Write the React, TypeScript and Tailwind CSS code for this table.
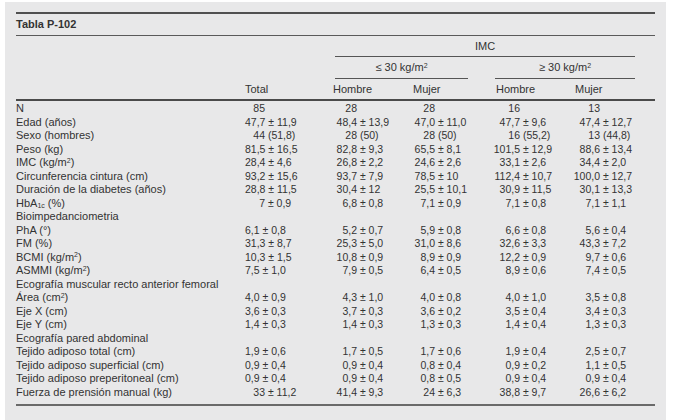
import React from "react"

type Row = { label: React.ReactNode; values?: string[] }

const sq = <sup className="text-[7px]">2</sup>

const rows: Row[] = [
  { label: "N", values: ["85", "28", "28", "16", "13"] },
  { label: "Edad (años)", values: ["47,7 ± 11,9", "48,4 ± 13,9", "47,0 ± 11,0", "47,7 ± 9,6", "47,4 ± 12,7"] },
  { label: "Sexo (hombres)", values: ["44 (51,8)", "28 (50)", "28 (50)", "16 (55,2)", "13 (44,8)"] },
  { label: "Peso (kg)", values: ["81,5 ± 16,5", "82,8 ± 9,3", "65,5 ± 8,1", "101,5 ± 12,9", "88,6 ± 13,4"] },
  { label: <>IMC (kg/m{sq})</>, values: ["28,4 ± 4,6", "26,8 ± 2,2", "24,6 ± 2,6", "33,1 ± 2,6", "34,4 ± 2,0"] },
  { label: "Circunferencia cintura (cm)", values: ["93,2 ± 15,6", "93,7 ± 7,9", "78,5 ± 10", "112,4 ± 10,7", "100,0 ± 12,7"] },
  { label: "Duración de la diabetes (años)", values: ["28,8 ± 11,5", "30,4 ± 12", "25,5 ± 10,1", "30,9 ± 11,5", "30,1 ± 13,3"] },
  {
    label: (
      <>
        HbA<sub className="text-[7px]">1c</sub> (%)
      </>
    ),
    values: ["7 ± 0,9", "6,8 ± 0,8", "7,1 ± 0,9", "7,1 ± 0,8", "7,1 ± 1,1"],
  },
  { label: "Bioimpedanciometria" },
  { label: "PhA (°)", values: ["6,1 ± 0,8", "5,2 ± 0,7", "5,9 ± 0,8", "6,6 ± 0,8", "5,6 ± 0,4"] },
  { label: "FM (%)", values: ["31,3 ± 8,7", "25,3 ± 5,0", "31,0 ± 8,6", "32,6 ± 3,3", "43,3 ± 7,2"] },
  { label: <>BCMI (kg/m{sq})</>, values: ["10,3 ± 1,5", "10,8 ± 0,9", "8,9 ± 0,9", "12,2 ± 0,9", "9,7 ± 0,6"] },
  { label: <>ASMMI (kg/m{sq})</>, values: ["7,5 ± 1,0", "7,9 ± 0,5", "6,4 ± 0,5", "8,9 ± 0,6", "7,4 ± 0,5"] },
  { label: "Ecografía muscular recto anterior femoral" },
  { label: <>Área (cm{sq})</>, values: ["4,0 ± 0,9", "4,3 ± 1,0", "4,0 ± 0,8", "4,0 ± 1,0", "3,5 ± 0,8"] },
  { label: "Eje X (cm)", values: ["3,6 ± 0,3", "3,7 ± 0,3", "3,6 ± 0,2", "3,5 ± 0,4", "3,4 ± 0,3"] },
  { label: "Eje Y (cm)", values: ["1,4 ± 0,3", "1,4 ± 0,3", "1,3 ± 0,3", "1,4 ± 0,4", "1,3 ± 0,3"] },
  { label: "Ecografía pared abdominal" },
  { label: "Tejido adiposo total (cm)", values: ["1,9 ± 0,6", "1,7 ± 0,5", "1,7 ± 0,6", "1,9 ± 0,4", "2,5 ± 0,7"] },
  { label: "Tejido adiposo superficial (cm)", values: ["0,9 ± 0,4", "0,9 ± 0,4", "0,8 ± 0,4", "0,9 ± 0,2", "1,1 ± 0,5"] },
  { label: "Tejido adiposo preperitoneal (cm)", values: ["0,9 ± 0,4", "0,9 ± 0,4", "0,8 ± 0,5", "0,9 ± 0,4", "0,9 ± 0,4"] },
  { label: "Fuerza de prensión manual (kg)", values: ["33 ± 11,2", "41,4 ± 9,3", "24 ± 6,3", "38,8 ± 9,7", "26,6 ± 6,2"] },
]

// column widths (start x: 235, 327, 405, 490, 570)
const cols = [
  { width: "w-[92px]", head: "Total", pad: "pl-[10px]" },
  { width: "w-[78px]", head: "Hombre", pad: "pl-[6px]" },
  { width: "w-[85px]", head: "Mujer", pad: "pl-[8px]" },
  { width: "w-[80px]", head: "Hombre", pad: "pl-[6px]" },
  { width: "w-[85px]", head: "Mujer", pad: "pl-[5px]" },
]

function Cell({ value, col }: { value: string; col: number }) {
  const i = value.indexOf(" ")
  const left = value.slice(0, i < 0 ? value.length : i)
  const rest = i < 0 ? "" : value.slice(i)
  // the Total column keeps decimals flush left
  const flushLeft = col === 0 && left.includes(",")
  return (
    <div className={`${cols[col].width} flex whitespace-pre text-[10.5px]`}>
      <span className={flushLeft ? "w-[30px] shrink-0 pl-[10px] text-left" : "w-[30px] shrink-0 text-right"}>
        {flushLeft ? value : left}
      </span>
      {!flushLeft && <span>{rest}</span>}
    </div>
  )
}

export default function App() {
  return (
    <div className="w-[677px] h-[420px] bg-white pt-[2px] pl-[5px] font-['Liberation_Sans',Arial,sans-serif] text-[11px] text-[#333]">
      <div className="w-[661px] h-[418px] bg-[#e8e8e9] px-[11px] pt-[10px]">
        <div className="border-t-2 border-[#505050]" />
        <div className="h-[22px] flex items-center font-bold border-b border-[#5a5a5a]">Tabla P-102</div>

        {/* IMC group headers */}
        <div className="flex">
          <div className="w-[311px] shrink-0" />
          <div className="w-[328px]">
            <div className="ml-[8px] w-[300px] h-[21px] flex items-center justify-center border-b border-[#555]">IMC</div>
            <div className="flex ml-[8px]">
              <div className="w-[133px] h-[22px] flex items-center justify-center border-b border-[#555]">
                <span>≤ 30 kg/m{sq}</span>
              </div>
              <div className="ml-[27px] w-[140px] h-[22px] flex items-center justify-center border-b border-[#555]">
                <span>≥ 30 kg/m{sq}</span>
              </div>
            </div>
          </div>
        </div>

        <div className="h-[22px] flex items-center border-b-2 border-[#4a4a4a]">
          <div className="w-[219px] shrink-0" />
          {cols.map((c, i) => (
            <div key={i} className={`${c.width} ${c.pad}`}>
              {c.head}
            </div>
          ))}
        </div>

        <div className="pt-[1px]">
          {rows.map((r, idx) => (
            <div key={idx} className="flex items-center h-[13.5px] leading-[13.5px]">
              <div className="w-[219px] shrink-0 whitespace-nowrap">{r.label}</div>
              {r.values?.map((v, c) => <Cell key={c} value={v} col={c} />)}
            </div>
          ))}
        </div>

        <div className="mt-[5px] border-t-2 border-[#6a6a6a]" />
      </div>
    </div>
  )
}
